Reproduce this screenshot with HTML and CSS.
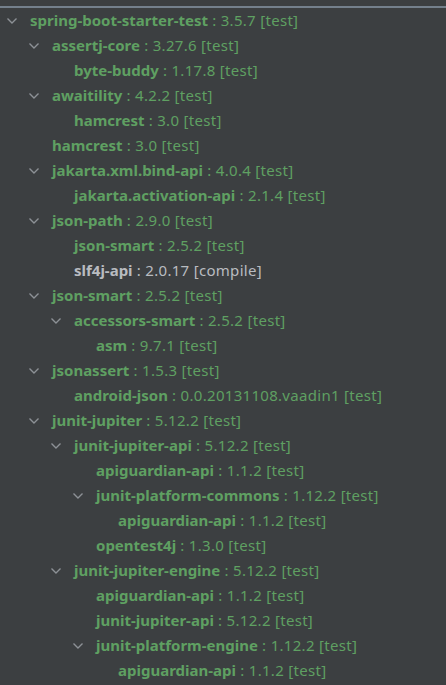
FILE: index.html
```html
<!DOCTYPE html>
<html>
<head>
<meta charset="utf-8">
<link rel="stylesheet" href="styles.css">
</head>
<body>
<div class="topline"></div>
<ul class="tree">
  <li class="row l0"><span class="chev"><svg viewBox="0 0 12 8"><path d="M1.5 1.5 L6 6 L10.5 1.5"/></svg></span><b>spring-boot-starter-test</b><span class="v"> : 3.5.7 [test]</span></li>
  <li class="row l1"><span class="chev"><svg viewBox="0 0 12 8"><path d="M1.5 1.5 L6 6 L10.5 1.5"/></svg></span><b>assertj-core</b><span class="v"> : 3.27.6 [test]</span></li>
  <li class="row l2"><span class="chev"></span><b>byte-buddy</b><span class="v"> : 1.17.8 [test]</span></li>
  <li class="row l1"><span class="chev"><svg viewBox="0 0 12 8"><path d="M1.5 1.5 L6 6 L10.5 1.5"/></svg></span><b>awaitility</b><span class="v"> : 4.2.2 [test]</span></li>
  <li class="row l2"><span class="chev"></span><b>hamcrest</b><span class="v"> : 3.0 [test]</span></li>
  <li class="row l1"><span class="chev"></span><b>hamcrest</b><span class="v"> : 3.0 [test]</span></li>
  <li class="row l1"><span class="chev"><svg viewBox="0 0 12 8"><path d="M1.5 1.5 L6 6 L10.5 1.5"/></svg></span><b>jakarta.xml.bind-api</b><span class="v"> : 4.0.4 [test]</span></li>
  <li class="row l2"><span class="chev"></span><b>jakarta.activation-api</b><span class="v"> : 2.1.4 [test]</span></li>
  <li class="row l1"><span class="chev"><svg viewBox="0 0 12 8"><path d="M1.5 1.5 L6 6 L10.5 1.5"/></svg></span><b>json-path</b><span class="v"> : 2.9.0 [test]</span></li>
  <li class="row l2"><span class="chev"></span><b>json-smart</b><span class="v"> : 2.5.2 [test]</span></li>
  <li class="row l2 compile"><span class="chev"></span><b>slf4j-api</b><span class="v"> : 2.0.17 [compile]</span></li>
  <li class="row l1"><span class="chev"><svg viewBox="0 0 12 8"><path d="M1.5 1.5 L6 6 L10.5 1.5"/></svg></span><b>json-smart</b><span class="v"> : 2.5.2 [test]</span></li>
  <li class="row l2"><span class="chev"><svg viewBox="0 0 12 8"><path d="M1.5 1.5 L6 6 L10.5 1.5"/></svg></span><b>accessors-smart</b><span class="v"> : 2.5.2 [test]</span></li>
  <li class="row l3"><span class="chev"></span><b>asm</b><span class="v"> : 9.7.1 [test]</span></li>
  <li class="row l1"><span class="chev"><svg viewBox="0 0 12 8"><path d="M1.5 1.5 L6 6 L10.5 1.5"/></svg></span><b>jsonassert</b><span class="v"> : 1.5.3 [test]</span></li>
  <li class="row l2"><span class="chev"></span><b>android-json</b><span class="v"> : 0.0.20131108.vaadin1 [test]</span></li>
  <li class="row l1"><span class="chev"><svg viewBox="0 0 12 8"><path d="M1.5 1.5 L6 6 L10.5 1.5"/></svg></span><b>junit-jupiter</b><span class="v"> : 5.12.2 [test]</span></li>
  <li class="row l2"><span class="chev"><svg viewBox="0 0 12 8"><path d="M1.5 1.5 L6 6 L10.5 1.5"/></svg></span><b>junit-jupiter-api</b><span class="v"> : 5.12.2 [test]</span></li>
  <li class="row l3"><span class="chev"></span><b>apiguardian-api</b><span class="v"> : 1.1.2 [test]</span></li>
  <li class="row l3"><span class="chev"><svg viewBox="0 0 12 8"><path d="M1.5 1.5 L6 6 L10.5 1.5"/></svg></span><b>junit-platform-commons</b><span class="v"> : 1.12.2 [test]</span></li>
  <li class="row l4"><span class="chev"></span><b>apiguardian-api</b><span class="v"> : 1.1.2 [test]</span></li>
  <li class="row l3"><span class="chev"></span><b>opentest4j</b><span class="v"> : 1.3.0 [test]</span></li>
  <li class="row l2"><span class="chev"><svg viewBox="0 0 12 8"><path d="M1.5 1.5 L6 6 L10.5 1.5"/></svg></span><b>junit-jupiter-engine</b><span class="v"> : 5.12.2 [test]</span></li>
  <li class="row l3"><span class="chev"></span><b>apiguardian-api</b><span class="v"> : 1.1.2 [test]</span></li>
  <li class="row l3"><span class="chev"></span><b>junit-jupiter-api</b><span class="v"> : 5.12.2 [test]</span></li>
  <li class="row l3"><span class="chev"><svg viewBox="0 0 12 8"><path d="M1.5 1.5 L6 6 L10.5 1.5"/></svg></span><b>junit-platform-engine</b><span class="v"> : 1.12.2 [test]</span></li>
  <li class="row l4"><span class="chev"></span><b>apiguardian-api</b><span class="v"> : 1.1.2 [test]</span></li>
</ul>
</body>
</html>
```
FILE: styles.css
```css
html, body {
  margin: 0;
  padding: 0;
  background: #3c3f41;
  height: 100%;
  overflow: hidden;
}
body {
  font-family: "Noto Sans", "Open Sans", sans-serif;
  font-size: 15px;
  color: #5fa062;
}
.topline {
  height: 2px;
  margin-top: 6px;
  background: #74808c;
}
.tree {
  list-style: none;
  margin: 0;
  padding: 0;
}
.row {
  display: flex;
  align-items: center;
  height: 25px;
  white-space: nowrap;
}
.row b { font-weight: 700; padding-bottom: 2px; }
.row .v { white-space: pre; letter-spacing: 0.3px; padding-bottom: 2px; }
.compile { color: #b9bcc0; }
.chev {
  width: 16px;
  height: 25px;
  margin-right: 10px;
  display: flex;
  align-items: center;
  justify-content: center;
  flex: none;
}
.chev svg {
  width: 12px;
  height: 8px;
  fill: none;
  stroke: #8d9196;
  stroke-width: 1.4;
}
.l0 { padding-left: 4px; }
.l1 { padding-left: 26px; }
.l2 { padding-left: 48px; }
.l3 { padding-left: 70px; }
.l4 { padding-left: 92px; }
```
